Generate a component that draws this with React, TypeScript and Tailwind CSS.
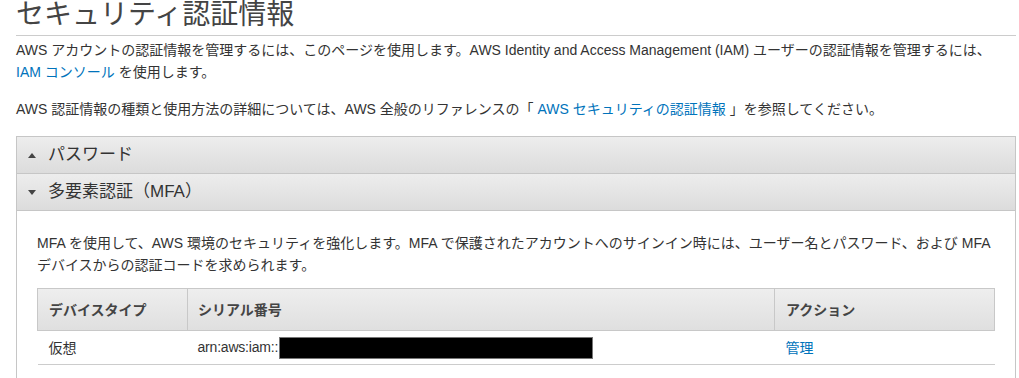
import React from 'react';

const font = { fontFamily: '"Liberation Sans", "Noto Sans CJK JP", sans-serif' };

function Caret({ up }: { up?: boolean }) {
  return (
    <svg width="8" height="5" viewBox="0 0 8 5" className="shrink-0">
      {up ? <path d="M0 5 L4 0 L8 5 Z" fill="#444" /> : <path d="M0 0 L8 0 L4 5 Z" fill="#444" />}
    </svg>
  );
}

function PanelHeader({ title, up }: { title: string; up?: boolean }) {
  return (
    <div className="h-[37px] flex items-center gap-[12px] pl-[11px] bg-gradient-to-b from-[#ededed] to-[#dcdcdc] border-b border-[#c6c6c6] text-[17px] text-[#333]">
      <Caret up={up} />
      <span>{title}</span>
    </div>
  );
}

export default function App() {
  return (
    <div className="bg-white min-h-screen text-[14px] text-[#333] leading-[22px]" style={font}>
      <div className="ml-[16px] w-[1000px]">
        <h1 className="text-[28px] leading-[29px] pb-[6px] text-[#444] border-b border-[#cccccc] font-normal">
          セキュリティ認証情報
        </h1>
        <p className="mt-[3px]">
          AWS アカウントの認証情報を管理するには、このページを使用します。AWS Identity and Access Management (IAM) ユーザーの認証情報を管理するには、
          <br />
          <a className="text-[#0073bb]">IAM コンソール</a> を使用します。
        </p>
        <p className="mt-[15px]">
          AWS 認証情報の種類と使用方法の詳細については、AWS 全般のリファレンスの「 <a className="text-[#0073bb]">AWS セキュリティの認証情報</a> 」を参照してください。
        </p>

        <div className="mt-[16px] border border-[#c6c6c6] border-b-0 w-[1000px]">
          <PanelHeader title="パスワード" up />
          <PanelHeader title="多要素認証（MFA）" />
          <div className="px-[20px] pt-[21px] pb-[20px]">
            <p>
              MFA を使用して、AWS 環境のセキュリティを強化します。MFA で保護されたアカウントへのサインイン時には、ユーザー名とパスワード、および MFA
              <br />
              デバイスからの認証コードを求められます。
            </p>
            <table className="mt-[12px] w-[958px] border-collapse">
              <thead>
                <tr className="bg-gradient-to-b from-[#eeeeee] to-[#dfdfdf] h-[42px]">
                  <th className="w-[150px] border border-[#c8c8c8] text-left font-bold text-[#444] pl-[11px]">デバイスタイプ</th>
                  <th className="w-[587px] border border-[#c8c8c8] text-left font-bold text-[#444] pl-[10px]">シリアル番号</th>
                  <th className="border border-[#c8c8c8] text-left font-bold text-[#444] pl-[11px]">アクション</th>
                </tr>
              </thead>
              <tbody>
                <tr className="h-[34px] border-b border-[#cccccc]">
                  <td className="pl-[11px]">仮想</td>
                  <td className="pl-[10px] whitespace-nowrap">
                    <span className="tracking-[-0.2px]">arn:aws:iam::</span>
                    <span className="inline-block align-middle ml-[1px] w-[314px] h-[22px] bg-black border border-[#777]" />
                  </td>
                  <td className="pl-[11px]">
                    <a className="text-[#0073bb]">管理</a>
                  </td>
                </tr>
              </tbody>
            </table>
          </div>
        </div>
      </div>
    </div>
  );
}
